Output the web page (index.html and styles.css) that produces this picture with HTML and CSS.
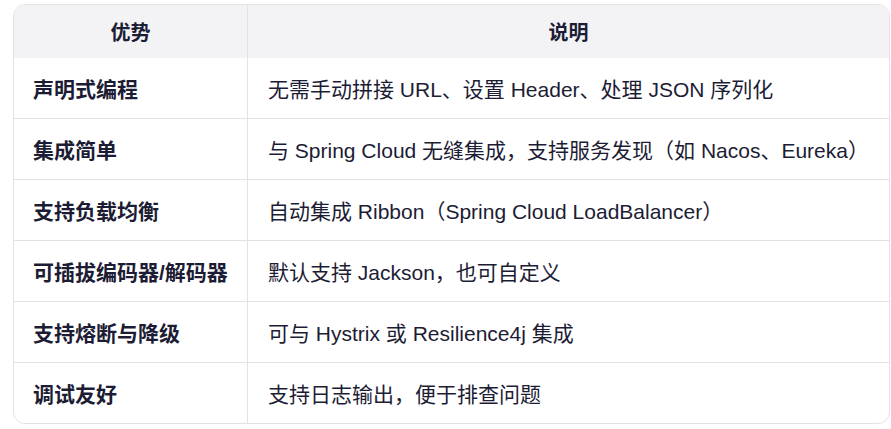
FILE: index.html
```html
<!DOCTYPE html>
<html lang="zh-CN">
<head>
<meta charset="utf-8">
<title>优势说明</title>
<link rel="stylesheet" href="styles.css">
</head>
<body>
<div class="wrap">
  <table class="tbl">
    <thead>
      <tr><th class="c1">优势</th><th class="c2">说明</th></tr>
    </thead>
    <tbody>
      <tr><td class="c1">声明式编程</td><td class="c2">无需手动拼接 URL、设置 Header、处理 JSON 序列化</td></tr>
      <tr><td class="c1">集成简单</td><td class="c2">与 Spring Cloud 无缝集成，支持服务发现（如 Nacos、Eureka）</td></tr>
      <tr><td class="c1">支持负载均衡</td><td class="c2">自动集成 Ribbon（Spring Cloud LoadBalancer）</td></tr>
      <tr><td class="c1">可插拔编码器/解码器</td><td class="c2">默认支持 Jackson，也可自定义</td></tr>
      <tr><td class="c1">支持熔断与降级</td><td class="c2">可与 Hystrix 或 Resilience4j 集成</td></tr>
      <tr><td class="c1">调试友好</td><td class="c2">支持日志输出，便于排查问题</td></tr>
    </tbody>
  </table>
</div>
</body>
</html>
```
FILE: styles.css
```css
html, body {
  margin: 0;
  padding: 0;
  background: #ffffff;
}
body {
  font-family: "Liberation Sans", "Noto Sans CJK SC", sans-serif;
  font-size: 21px;
  color: #1c1c34;
}
.wrap {
  padding: 4px 1px 0 13px;
}
.tbl {
  width: 877px;
  border-collapse: separate;
  border-spacing: 0;
  border: 1px solid #e3e3e6;
  border-radius: 12px;
  overflow: hidden;
  table-layout: fixed;
}
.tbl th {
  background: #f3f3f6;
  font-weight: 700;
  font-size: 20px;
  text-align: center;
  height: 53px;
  padding: 0;
}
.tbl td {
  height: 60px;
  padding: 0 0 0 20px;
  border-top: 1px solid #e3e3e6;
  text-align: left;
  white-space: nowrap;
}
.tbl tbody tr:first-child td {
  border-top: none;
}
.tbl .c1 {
  width: 233px;
  border-right: 1px solid #e3e3e6;
}
.tbl td.c1 {
  font-weight: 700;
  padding-left: 19px;
  width: 214px;
}
.tbl td.c2 {
  padding-left: 20px;
}
```
